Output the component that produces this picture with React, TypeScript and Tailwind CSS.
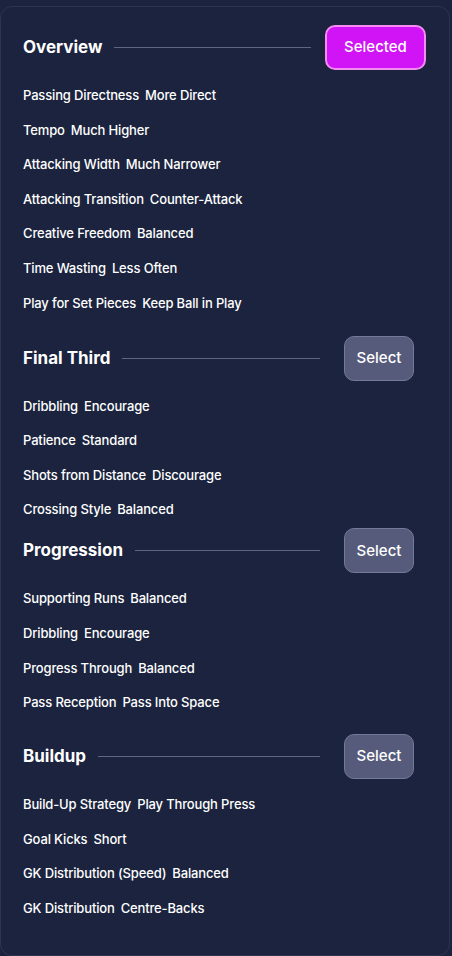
import React from 'react'

type Item = { label: string; value: string }

type Section = {
  title: string
  selected: boolean
  gapTop: string
  items: Item[]
}

const sections: Section[] = [
  {
    title: 'Overview',
    selected: true,
    gapTop: 'mt-0',
    items: [
      { label: 'Passing Directness', value: 'More Direct' },
      { label: 'Tempo', value: 'Much Higher' },
      { label: 'Attacking Width', value: 'Much Narrower' },
      { label: 'Attacking Transition', value: 'Counter-Attack' },
      { label: 'Creative Freedom', value: 'Balanced' },
      { label: 'Time Wasting', value: 'Less Often' },
      { label: 'Play for Set Pieces', value: 'Keep Ball in Play' },
    ],
  },
  {
    title: 'Final Third',
    selected: false,
    gapTop: 'mt-[23px]',
    items: [
      { label: 'Dribbling', value: 'Encourage' },
      { label: 'Patience', value: 'Standard' },
      { label: 'Shots from Distance', value: 'Discourage' },
      { label: 'Crossing Style', value: 'Balanced' },
    ],
  },
  {
    title: 'Progression',
    selected: false,
    gapTop: 'mt-[9px]',
    items: [
      { label: 'Supporting Runs', value: 'Balanced' },
      { label: 'Dribbling', value: 'Encourage' },
      { label: 'Progress Through', value: 'Balanced' },
      { label: 'Pass Reception', value: 'Pass Into Space' },
    ],
  },
  {
    title: 'Buildup',
    selected: false,
    gapTop: 'mt-[22px]',
    items: [
      { label: 'Build-Up Strategy', value: 'Play Through Press' },
      { label: 'Goal Kicks', value: 'Short' },
      { label: 'GK Distribution (Speed)', value: 'Balanced' },
      { label: 'GK Distribution', value: 'Centre-Backs' },
    ],
  },
]

function SectionBlock({ section }: { section: Section }) {
  return (
    <div className={section.gapTop}>
      <div className="flex items-center h-[45px] pl-[22px]">
        <h2 className="text-[17px] font-bold text-white leading-none">
          {section.title}
        </h2>
        <div className="flex-1 h-px bg-[#5d6684] ml-3" />
        {section.selected ? (
          <button className="ml-[14px] mr-[23px] w-[101px] h-[45px] rounded-[10px] bg-[#d014f5] border-2 border-[#f48cf3] text-white text-[15px] font-medium">
            Selected
          </button>
        ) : (
          <button className="ml-[24px] mr-[35px] w-[70px] h-[45px] rounded-[10px] bg-[#565b7b] border border-[#737999] text-white text-[15px] font-medium">
            Select
          </button>
        )}
      </div>
      <ul className="mt-[15px] flex flex-col gap-[14.6px] pl-[22px]">
        {section.items.map((it, i) => (
          <li
            key={i}
            className="text-[13px] leading-[20px] font-medium text-white tracking-[-0.15px]"
          >
            {it.label}
            <span className="ml-[6px]">{it.value}</span>
          </li>
        ))}
      </ul>
    </div>
  )
}

export default function App() {
  return (
    <div
      className="min-h-[956px] w-[452px] bg-[#1b233e] pt-[6px]"
      style={{ fontFamily: 'Inter, "Noto Sans", sans-serif' }}
    >
      <div className="w-[450px] h-[950px] rounded-[12px] border border-[#2c3550] pt-[18px]">
        {sections.map((s) => (
          <SectionBlock key={s.title} section={s} />
        ))}
      </div>
    </div>
  )
}
